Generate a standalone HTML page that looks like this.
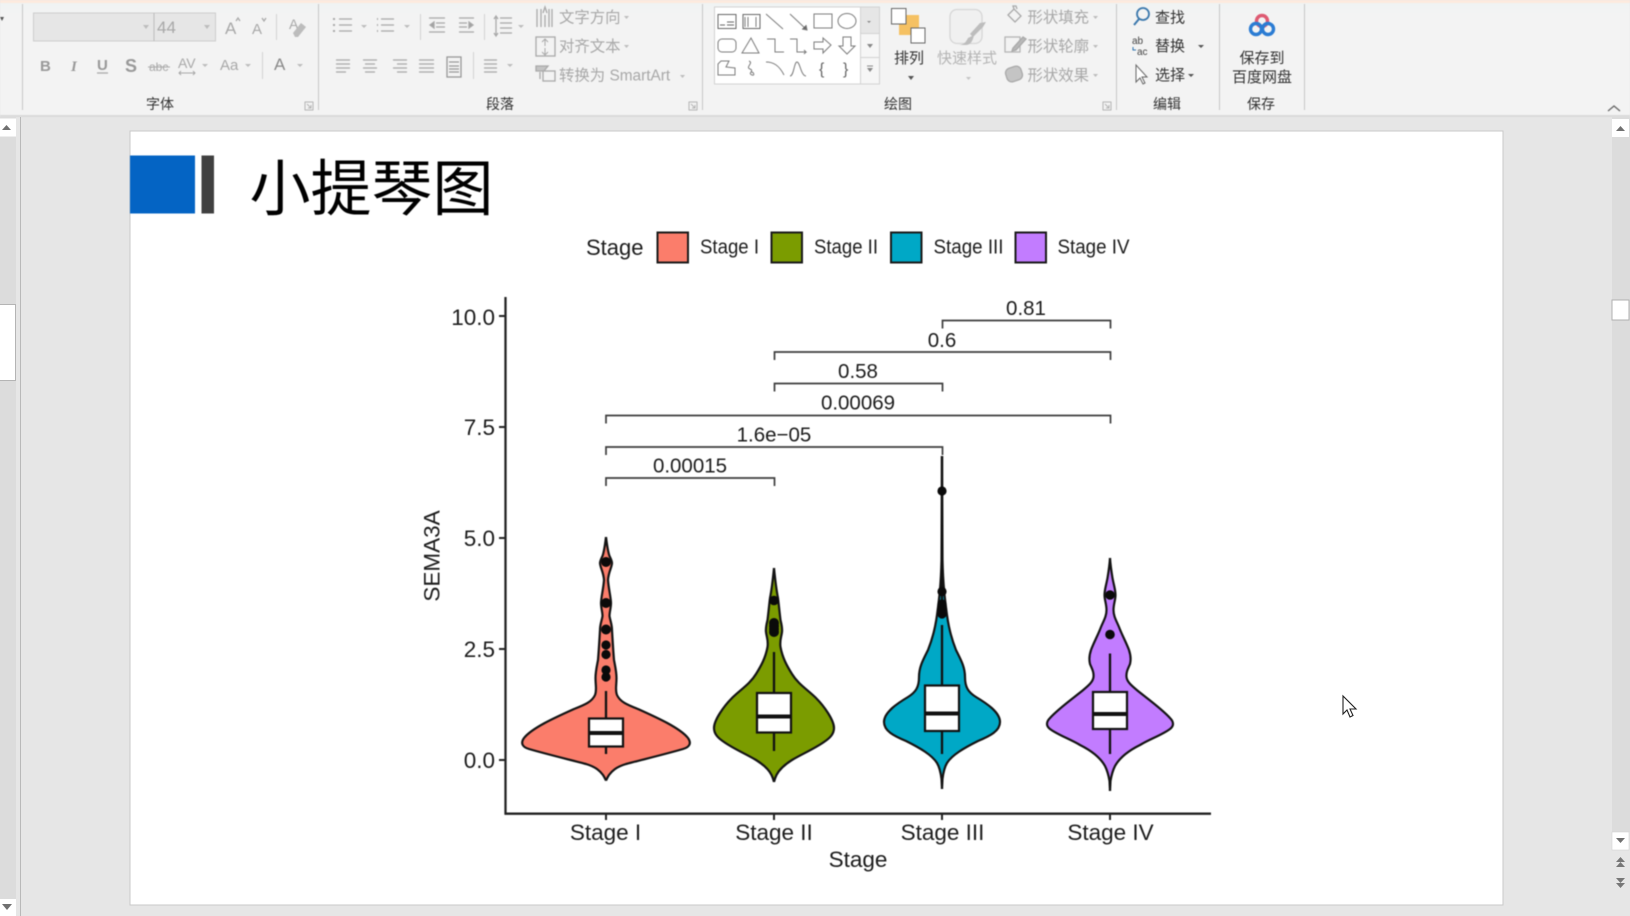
<!DOCTYPE html>
<html lang="zh"><head><meta charset="utf-8"><title>小提琴图</title>
<style>
html,body{margin:0;padding:0;width:1630px;height:916px;overflow:hidden;background:#e6e6e6}
svg{display:block;position:absolute;left:0;top:0}
text{font-family:"Liberation Sans","Noto Sans CJK SC",sans-serif}
.r text{font-size:15px;fill:#a8a8a8}
.d text{fill:#333!important}
.lab text{font-size:14px;fill:#333;text-anchor:middle}
.ic{fill:none;stroke:#a9a9a9;stroke-width:1.3}
.sh{fill:none;stroke:#7c7c7c;stroke-width:1}
.tick{font-size:22.5px;fill:#1c1c1c}
.br{font-size:20.5px;fill:#1c1c1c;text-anchor:middle}
.brk{fill:none;stroke:#3d3d3d;stroke-width:1.7}
.v{stroke:#141414;stroke-width:2.2;stroke-linejoin:round}
.wh{stroke:#111;stroke-width:2.3}
.bx{fill:#fff;stroke:#111;stroke-width:2.2}
.md{stroke:#111;stroke-width:4}
</style></head><body>
<svg width="1630" height="916" viewBox="0 0 1630 916" xmlns="http://www.w3.org/2000/svg">
<defs><linearGradient id="tg" x1="0" y1="0" x2="0" y2="1"><stop offset="0" stop-color="#f0f3f3"/><stop offset="1" stop-color="#f3f3f3"/></linearGradient></defs>
<rect width="1630" height="916" fill="#e6e6e6"/>
<!-- ribbon -->
<g style="filter:blur(.45px)">
<rect width="1630" height="115" fill="#f3f3f3"/>
<rect y="3" width="1630" height="11" fill="url(#tg)"/>
<rect width="1630" height="3" fill="#fdeade"/>
<rect y="115" width="1630" height="2" fill="#dadada"/>
<path d="M0 17h4l-2 4z" fill="#555"/>
<path d="M22.5 4V110M318.5 4V110M702.5 4V110M1116.5 4V110M1219.5 4V110M1304.5 4V110" stroke="#c6c6c6" stroke-width="1"/>
<!-- font group -->
<rect x="33.5" y="13" width="182" height="28" fill="#e6e6e6" stroke="#cdcdcd"/>
<path d="M154 13V41" stroke="#bdbdbd"/>
<g class="r">
<text x="157" y="33" style="font-size:17px">44</text>
<path d="M143 25h6l-3 4zM204 25h6l-3 4z" fill="#bdbdbd"/>
<text x="225" y="34" style="font-size:17px">A</text><path d="M236 21l2-3 2 3" class="ic"/>
<text x="252" y="34" style="font-size:15px">A</text><path d="M262 18l2 3 2-3" class="ic"/>
<path d="M276.5 14V40" stroke="#d3d3d3"/>
<text x="289" y="29" style="font-size:14px">A</text><path d="M293 33l8-10 5 4-8 10h-3z" fill="#bcbcbc"/>
<text x="40" y="71" style="font-size:15px;font-weight:bold;fill:#999">B</text>
<text x="71" y="71" style="font-size:15px;font-style:italic;font-family:'Liberation Serif',serif;font-weight:bold;fill:#999">I</text>
<text x="97" y="70" style="font-size:15px;font-weight:bold;fill:#999">U</text><path d="M97 73h11" stroke="#a9a9a9" stroke-width="1.3"/>
<text x="125" y="72" style="font-size:18px;font-weight:bold;fill:#999">S</text>
<text x="149" y="71" style="font-size:12px">abc</text><path d="M148 67h22" stroke="#a9a9a9"/>
<text x="178" y="68" style="font-size:14px">AV</text><path d="M179 73h16M181 71l-2 2 2 2M193 71l2 2-2 2" class="ic" style="stroke-width:1"/>
<path d="M202 64h6l-3 3zM245 64h6l-3 3zM297 64h6l-3 3z" fill="#bdbdbd"/>
<text x="220" y="70" style="font-size:15px">Aa</text>
<path d="M262.5 52V79" stroke="#d3d3d3"/>
<text x="274" y="70" style="font-size:17px;fill:#8a8a8a">A</text>
</g>
<!-- paragraph -->
<g class="ic">
<path d="M339 19h13M339 25h13M339 31h13M381 19h13M381 25h13M381 31h13"/>
<path d="M333 19h2M333 25h2M333 31h2M377 19h1M377 25h1M377 31h1" stroke-width="2"/>
<path d="M420.5 14V40M484.5 14V40M473.5 52V79" stroke="#d3d3d3" stroke-width="1"/>
<path d="M429 18h16M436 23h9M436 27h9M429 32h16M459 18h15M459 32h15M459 23h8M459 27h8"/>
<path d="M434 22l-4 3 4 3zM469 22l4 3-4 3z" fill="#a0a0a0"/>
<path d="M500 18h12M500 23h12M500 28h12M500 33h12M496 17v18M494 19l2-3 2 3M494 33l2 3 2-3"/>
<path d="M336 60h14M336 64h14M336 68h14M336 72h10M363 60h14M365 64h10M363 68h14M365 72h10M393 60h14M397 64h10M393 68h14M397 72h10M419 60h15M419 64h15M419 68h15M419 72h15M484 60h13M484 64h13M484 68h13M484 72h13"/>
<rect x="447" y="57" width="14" height="20" stroke="#999"/><path d="M449 66h10M449 69h10M449 72h10M449 62h10" stroke="#999"/>
</g>
<path d="M361 25h6l-3 3zM404 25h6l-3 3zM518 25h6l-3 3zM507 64h6l-3 3zM624 16h5l-2.500 3zM624 45h5l-2.500 3zM680 75h5l-2.500 3z" fill="#bdbdbd"/>
<g class="ic">
<path d="M537 9v18M541 9v18M545 15v12M549 9v18M552 9v18"/><path d="M543 13l2-6 2 6"/>
<rect x="536" y="37" width="19" height="19"/><path d="M545 39v7M545 48v7M542 42l3-3 3 3M542 52l3 3 3-3" stroke-width="1"/>
<path d="M536 66h12l-4 5h-8zM540 72v7" fill="#c4c4c4"/><rect x="543" y="71" width="12" height="10" fill="#f3f3f3"/>
</g>
<g class="r">
<text x="559" y="22.500" style="font-size:15.400px">文字方向</text>
<text x="559" y="51.500" style="font-size:15.400px">对齐文本</text>
<text x="559" y="80.500" style="font-size:15.400px">转换为 SmartArt</text>
</g>
<!-- launchers -->
<g stroke="#b5b5b5" fill="none"><rect x="305" y="102" width="8" height="8"/><path d="M307 104l4 4m0-3v3h-3"/><rect x="689" y="102" width="8" height="8"/><path d="M691 104l4 4m0-3v3h-3"/><rect x="1103" y="102" width="8" height="8"/><path d="M1105 104l4 4m0-3v3h-3"/></g>
<g class="lab">
<text x="160" y="109">字体</text><text x="500" y="109">段落</text><text x="898" y="109">绘图</text><text x="1167" y="109">编辑</text><text x="1261" y="109">保存</text>
</g>
<!-- shape gallery -->
<rect x="714.500" y="7" width="146" height="77" fill="#fff" stroke="#d2d2d2"/>
<rect x="860.500" y="7" width="19" height="77" fill="#f6f6f6" stroke="#d2d2d2"/>
<rect x="861" y="7.500" width="18" height="26" fill="#e6e6e6"/>
<path d="M860.500 33.500h19M860.500 57.500h19" stroke="#d2d2d2"/>
<path d="M867 21h4l-2 2zM867 44h6l-3 4zM867 68h6l-3 4z" fill="#888"/><path d="M867 66h6" stroke="#888"/>
<g class="sh">
<rect x="718" y="14.500" width="18" height="14" stroke="#666"/><path d="M727 22h7M727 25h7M720 25h5" stroke="#666"/>
<rect x="743" y="14.500" width="17" height="14" stroke="#666"/><path d="M745 17v10M748 17v10M756 17v10"/>
<path d="M766 14l17 15M790 14l17 16"/><path d="M802 29l5 1-1-5" fill="#666"/>
<rect x="814" y="14" width="18" height="14"/><ellipse cx="847" cy="21" rx="9" ry="7.500"/>
<rect x="718" y="39" width="18" height="13" rx="4"/><path d="M751 38l-9 15h17z"/>
<path d="M767 39h8v13h9M790 39h7v13h9l-2-2m2 2l-2 2"/>
<path d="M814 42h9v-4l8 7-8 8v-4h-9z"/><path d="M843 37h8v9h4l-8 8-8-8h4z"/>
<path d="M718 75V64l3-3h8l-3 6 9 1v7z"/><path d="M749 61c5 2-4 6 1 8s-3 4 2 6c3 1 2-3-1-3"/>
<path d="M766 62c7 0 13 3 18 13"/><path d="M790 76c4 0 4-14 7-14s4 14 9 14"/>
</g>
<text x="819" y="74" style="font-size:16px;fill:#666">{</text><text x="843" y="74" style="font-size:16px;fill:#666">}</text>
<!-- arrange -->
<rect x="899" y="15" width="20" height="20" fill="#f5c163"/>
<rect x="891.500" y="8.500" width="14.500" height="15.500" fill="#fff" stroke="#666"/>
<rect x="911" y="28" width="14" height="15" fill="#fff" stroke="#666"/>
<g class="d"><text x="909" y="63" text-anchor="middle" style="font-size:15px">排列</text></g>
<path d="M908 76h6l-3 4z" fill="#555"/>
<!-- quick styles -->
<rect x="950" y="9.500" width="32" height="34" rx="7" fill="#f0f0f0" stroke="#d6d6d6" stroke-width="1.300"/>
<path d="M958 45c6 0 8-3 10-7l6-3c-1 5-3 10-8 10zM970 34l10-11 6-1-3 5-10 10z" fill="#bdbdbd"/>
<g class="r"><text x="967" y="63" text-anchor="middle" style="font-size:15px;fill:#b4b4b4">快速样式</text></g>
<path d="M966 77h5l-2.500 3z" fill="#c4c4c4"/>
<g class="ic">
<path d="M1008 15l6-6 7 7-6 6zM1014 9l-1-3 3 0 1 3"/>
<rect x="1005" y="37" width="15" height="15" stroke="#b5b5b5"/><path d="M1013 48l10-11 3 2-10 11-4 1z" fill="#b8b8b8"/>
<rect x="1006" y="67" width="16" height="14" rx="5" fill="#c4c4c4" transform="rotate(-18 1014 74)"/>
</g>
<g class="r" style="font-size:15px">
<text x="1027.500" y="22.500" style="font-size:15.400px">形状填充</text>
<text x="1027.500" y="51.500" style="font-size:15.400px">形状轮廓</text>
<text x="1027.500" y="80.500" style="font-size:15.400px">形状效果</text>
</g>
<path d="M1093 16h5l-2.500 3zM1093 45h5l-2.500 3zM1093 74h5l-2.500 3z" fill="#bdbdbd"/>
<!-- edit -->
<circle cx="1143" cy="14" r="6" fill="none" stroke="#3b78ad" stroke-width="1.800"/><path d="M1139 19l-5 6" stroke="#3b78ad" stroke-width="2"/>
<text x="1132" y="44" style="font-size:10px;fill:#444">ab</text><text x="1137" y="55" style="font-size:10px;fill:#444">ac</text><path d="M1133 47v3h3" stroke="#2f74b0" fill="none"/>
<path d="M1136 65v17l4-4 3 6 2-1-3-6h5z" fill="#fff" stroke="#666"/>
<g class="d" style="font-size:15px">
<text x="1155" y="22.500" style="font-size:15px">查找</text><text x="1155" y="51" style="font-size:15px">替换</text><text x="1155" y="80" style="font-size:15px">选择</text>
</g>
<path d="M1198 45h6l-3 3zM1188 74h6l-3 3z" fill="#555"/>
<!-- baidu -->
<g fill="none" stroke-width="3.400"><circle cx="1262" cy="21" r="5.500" stroke="#de5a72"/><circle cx="1256" cy="29" r="5.500" stroke="#2b7cd3"/><circle cx="1268" cy="29" r="5.500" stroke="#2b7cd3"/></g>
<g class="d"><text x="1262" y="63" text-anchor="middle" style="font-size:15px">保存到</text><text x="1262" y="82" text-anchor="middle" style="font-size:15px">百度网盘</text></g>
<path d="M1608 111l6-5 6 5" fill="none" stroke="#666" stroke-width="1.300"/>
</g>
<!-- left scrollbar -->
<rect x="0" y="117" width="16" height="799" fill="#dcdcdc"/>
<rect x="0" y="118.500" width="16" height="18" fill="#fff"/><path d="M2 130h9l-4.500-5z" fill="#707070"/>
<rect x="-1" y="304.500" width="16.500" height="76" fill="#fff" stroke="#b4b4b4"/>
<rect x="0" y="899" width="16" height="17" fill="#fff"/><path d="M2 904h10l-5 6z" fill="#707070"/>
<rect x="20" y="117" width="1" height="799" fill="#b9b9b9"/>
<!-- right scrollbar -->
<rect x="1612" y="117" width="18" height="715" fill="#dcdcdc"/>
<rect x="1612" y="119" width="17" height="18" fill="#fff"/><path d="M1616 131h9l-4.500-5z" fill="#707070"/>
<rect x="1612" y="300" width="17" height="20" fill="#fff" stroke="#b0b0b0"/>
<rect x="1612" y="832" width="17" height="18" fill="#fff" stroke="#d2d2d2" stroke-width=".6"/><path d="M1616 838h9l-4.500 5z" fill="#707070"/>
<path d="M1616 862h9l-4.500-5zM1616 867h9l-4.500-5zM1616 878h9l-4.500 5zM1616 883h9l-4.500 5z" fill="#777"/>
<!-- slide -->
<rect x="130" y="131" width="1373" height="774" fill="#fff" stroke="#c9c9c9"/>
<g style="filter:blur(.4px)">
<rect x="130" y="155.500" width="65" height="58" fill="#0464c4"/>
<rect x="201.500" y="155.500" width="12.500" height="58" fill="#404040"/>
<text x="249.500" y="210" style="font-size:61px;fill:#000;font-family:'Noto Sans CJK SC',sans-serif;font-weight:400">小提琴图</text>
<!-- legend -->
<text x="586" y="255" style="font-size:22px;fill:#1c1c1c">Stage</text>
<g stroke="#1a1a1a" stroke-width="2">
<rect x="657.500" y="232.500" width="30.500" height="30" fill="#fb7d6b"/>
<rect x="771.500" y="232.500" width="30.500" height="30" fill="#7b9c00"/>
<rect x="891" y="232.500" width="30.500" height="30" fill="#00a8c6"/>
<rect x="1015.500" y="232.500" width="30.500" height="30" fill="#c27cff"/>
</g>
<g style="font-size:20px;fill:#1c1c1c">
<text x="700" y="253.500" textLength="59" lengthAdjust="spacingAndGlyphs">Stage I</text>
<text x="814" y="253.500" textLength="64" lengthAdjust="spacingAndGlyphs">Stage II</text>
<text x="933.500" y="253.500" textLength="70" lengthAdjust="spacingAndGlyphs">Stage III</text>
<text x="1057.500" y="253.500" textLength="72" lengthAdjust="spacingAndGlyphs">Stage IV</text>
</g>
<!-- axes -->
<path d="M505.500 297V814.500M504.500 813.700H1211" fill="none" stroke="#222" stroke-width="2.300"/>
<path d="M499 316h6M499 427h6M499 538h6M499 649h6M499 760h6M606 814v6M774 814v6M942 814v6M1110 814v6" stroke="#222" stroke-width="2"/>
<g class="tick" text-anchor="end">
<text x="495" y="325">10.0</text><text x="495" y="435">7.5</text><text x="495" y="546">5.0</text><text x="495" y="657">2.5</text><text x="495" y="768">0.0</text>
</g>
<g class="tick" text-anchor="middle">
<text x="605.500" y="840">Stage I</text><text x="774" y="840">Stage II</text><text x="942.500" y="840">Stage III</text><text x="1110.500" y="840">Stage IV</text>
<text x="858" y="867">Stage</text>
<text transform="translate(439.500 556) rotate(-90)">SEMA3A</text>
</g>
<!-- brackets -->
<g class="brk">
<path d="M942.500 328.500V320.500H1110.500V328.500"/>
<path d="M774.500 360V352H1110.500V360"/>
<path d="M774.500 391.500V383.500H942.500V391.500"/>
<path d="M606 423.500V415.500H1110.500V423.500"/>
<path d="M606 455V447H942.500V455"/>
<path d="M606 486V478H774.500V486"/>
</g>
<text class="br" x="1026" y="315">0.81</text>
<text class="br" x="942" y="347">0.6</text>
<text class="br" x="858" y="378">0.58</text>
<text class="br" x="858" y="409.500">0.00069</text>
<text class="br" x="774" y="441.500">1.6e−05</text>
<text class="br" x="690" y="472.500">0.00015</text>
<!-- violin I -->
<g transform="translate(606 0)">
<g fill="#fb7d6b" class="v">
<path id="v1" d="M0 537C1 545 2 552 3.500 556C5 559 6 561 6 563C6 567 2.500 572 2 580C2.500 588 5 598 5 603C5 608 3.500 612 3.500 616C4 620 6 624 6 630C6.500 638 7 648 8 660C9.500 668 10.500 672 10.500 678C10.500 686 9 690 11 695C14 702 22 705 32 709C52 718 74 728 82 738C85.500 743 84 747 77 749C60 754 35 760 20 764C10 767 6 771 3 775C1 778 .5 780 0 780.500"/>
<use href="#v1" transform="scale(-1 1)"/>
</g>
<path class="wh" d="M0 691V754"/>
<rect class="bx" x="-17" y="718.500" width="34" height="28"/>
<path class="md" d="M-17 733H17"/>
<g fill="#0a0a0a"><circle cy="562" r="5"/><circle cy="603" r="5"/><circle cy="629.500" r="5"/><circle cy="645" r="4.600"/><circle cy="654.500" r="4.600"/><circle cy="670" r="4.600"/><circle cy="677" r="4.600"/></g>
</g>
<!-- violin II -->
<g transform="translate(774 0)">
<g fill="#7b9c00" class="v">
<path id="v2" d="M0 568C1 578 2 588 4 598C5 606 5.500 612 6.500 620C7.500 624 8.500 628 8 632C7.500 637 5.500 640 6.500 647C8.500 658 13 666 18 674C24 684 34 690 42 698C50 706 60 720 60 728C60 734 56 738 50 742C40 749 28 754 18 760C10 765 5 770 2.500 775C1 778 .5 780 0 782"/>
<use href="#v2" transform="scale(-1 1)"/>
</g>
<path class="wh" d="M0 652V751"/>
<rect class="bx" x="-17" y="693" width="34" height="39.500"/>
<path class="md" d="M-17 716.500H17"/>
<g fill="#0a0a0a"><circle cy="600.500" r="4.800"/><circle cy="623" r="5"/><circle cy="626" r="5"/><circle cy="629" r="5"/><circle cy="632" r="5"/></g>
</g>
<!-- violin III -->
<g transform="translate(942 0)">
<g fill="#00a8c6" class="v">
<path id="v3" d="M0 456L.5 560C1 585 3 600 5 615C7 630 10 640 14 650C19 660 23 667 23 677C23 687 26 692 34 697C44 703 58 712 58 722C58 731 48 736 36 741C22 748 10 755 5 763C2 768 1 775 .5 779L0 789"/>
<use href="#v3" transform="scale(-1 1)"/>
</g>
<path class="wh" d="M0 456V600M0 625V754"/>
<rect class="bx" x="-17" y="685.500" width="34" height="45.500"/>
<path class="md" d="M-17 713.500H17"/>
<g fill="#0a0a0a"><circle cy="491" r="4.600"/><circle cy="591.500" r="4.600"/><circle cy="604" r="4.600"/><circle cy="609" r="4.600"/><circle cy="614" r="4.600"/></g>
</g>
<!-- violin IV -->
<g transform="translate(1110 0)">
<g fill="#c27cff" class="v">
<path id="v4" d="M0 558C.5 566 1.500 572 2.500 578C4 586 5.500 590 5.500 595C5.500 600 3.500 604 3.500 610C3.500 616 6 620 9 627C12 635 16 642 19 650C21 656 21 660 20 664C18 669 16 672 16.500 677C17 682 22 686 28 691C38 699 52 709 60 718C64 722 64 726 60 729C52 735 40 739 30 745C20 750 10 757 5 766C2 772 1 778 .5 781L0 791"/>
<use href="#v4" transform="scale(-1 1)"/>
</g>
<path class="wh" d="M0 653.500V754"/>
<rect class="bx" x="-17" y="692" width="34" height="37"/>
<path class="md" d="M-17 714H17"/>
<g fill="#0a0a0a"><circle cy="595" r="4.800"/><circle cy="634.500" r="4.800"/></g>
</g>
</g>
<!-- cursor -->
<path d="M1343 696V714L1347 710L1350 717L1353 715.500L1350 709H1356Z" fill="#fff" stroke="#222" stroke-width="1.100"/>
</svg>
</body></html>
